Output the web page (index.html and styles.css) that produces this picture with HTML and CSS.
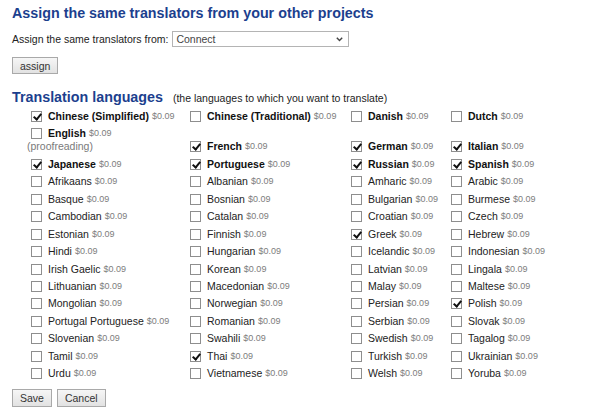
FILE: index.html
```html
<!DOCTYPE html>
<html lang="en">
<head>
    <meta charset="UTF-8">
    <title>Translation languages</title>
    <link rel="stylesheet" href="styles.css">
</head>
<body>
    <h1 class="title">Assign the same translators from your other projects</h1>

    <div class="assign-row">
        <label for="project">Assign the same translators from:</label>
        <div class="select-wrap">
            <select id="project">
                <option>Connect</option>
            </select>
            <svg class="chevron" width="7" height="5" viewBox="0 0 7 5"><path d="M0.8 0.8 L3.5 3.6 L6.2 0.8" fill="none" stroke="#444" stroke-width="1.4"/></svg>
        </div>
    </div>

    <button class="btn">assign</button>

    <h2 class="title">Translation languages <span class="hint">(the languages to which you want to translate)</span></h2>

    <div class="langs">
        <div class="lang main"><span class="box on"></span><b>Chinese (Simplified)</b> <span class="price">$0.09</span></div>
        <div class="lang main"><span class="box"></span><b>Chinese (Traditional)</b> <span class="price">$0.09</span></div>
        <div class="lang main"><span class="box"></span><b>Danish</b> <span class="price">$0.09</span></div>
        <div class="lang main"><span class="box"></span><b>Dutch</b> <span class="price">$0.09</span></div>

        <div class="cell">
            <div class="lang main"><span class="box"></span><b>English</b> <span class="price">$0.09</span></div>
            <div class="note">(proofreading)</div>
        </div>
        <div class="lang main"><span class="box on"></span><b>French</b> <span class="price">$0.09</span></div>
        <div class="lang main"><span class="box on"></span><b>German</b> <span class="price">$0.09</span></div>
        <div class="lang main"><span class="box on"></span><b>Italian</b> <span class="price">$0.09</span></div>

        <div class="lang main"><span class="box on"></span><b>Japanese</b> <span class="price">$0.09</span></div>
        <div class="lang main"><span class="box on"></span><b>Portuguese</b> <span class="price">$0.09</span></div>
        <div class="lang main"><span class="box on"></span><b>Russian</b> <span class="price">$0.09</span></div>
        <div class="lang main"><span class="box on"></span><b>Spanish</b> <span class="price">$0.09</span></div>

        <div class="lang"><span class="box"></span>Afrikaans <span class="price">$0.09</span></div>
        <div class="lang"><span class="box"></span>Albanian <span class="price">$0.09</span></div>
        <div class="lang"><span class="box"></span>Amharic <span class="price">$0.09</span></div>
        <div class="lang"><span class="box"></span>Arabic <span class="price">$0.09</span></div>

        <div class="lang"><span class="box"></span>Basque <span class="price">$0.09</span></div>
        <div class="lang"><span class="box"></span>Bosnian <span class="price">$0.09</span></div>
        <div class="lang"><span class="box"></span>Bulgarian <span class="price">$0.09</span></div>
        <div class="lang"><span class="box"></span>Burmese <span class="price">$0.09</span></div>

        <div class="lang"><span class="box"></span>Cambodian <span class="price">$0.09</span></div>
        <div class="lang"><span class="box"></span>Catalan <span class="price">$0.09</span></div>
        <div class="lang"><span class="box"></span>Croatian <span class="price">$0.09</span></div>
        <div class="lang"><span class="box"></span>Czech <span class="price">$0.09</span></div>

        <div class="lang"><span class="box"></span>Estonian <span class="price">$0.09</span></div>
        <div class="lang"><span class="box"></span>Finnish <span class="price">$0.09</span></div>
        <div class="lang"><span class="box on"></span>Greek <span class="price">$0.09</span></div>
        <div class="lang"><span class="box"></span>Hebrew <span class="price">$0.09</span></div>

        <div class="lang"><span class="box"></span>Hindi <span class="price">$0.09</span></div>
        <div class="lang"><span class="box"></span>Hungarian <span class="price">$0.09</span></div>
        <div class="lang"><span class="box"></span>Icelandic <span class="price">$0.09</span></div>
        <div class="lang"><span class="box"></span>Indonesian <span class="price">$0.09</span></div>

        <div class="lang"><span class="box"></span>Irish Gaelic <span class="price">$0.09</span></div>
        <div class="lang"><span class="box"></span>Korean <span class="price">$0.09</span></div>
        <div class="lang"><span class="box"></span>Latvian <span class="price">$0.09</span></div>
        <div class="lang"><span class="box"></span>Lingala <span class="price">$0.09</span></div>

        <div class="lang"><span class="box"></span>Lithuanian <span class="price">$0.09</span></div>
        <div class="lang"><span class="box"></span>Macedonian <span class="price">$0.09</span></div>
        <div class="lang"><span class="box"></span>Malay <span class="price">$0.09</span></div>
        <div class="lang"><span class="box"></span>Maltese <span class="price">$0.09</span></div>

        <div class="lang"><span class="box"></span>Mongolian <span class="price">$0.09</span></div>
        <div class="lang"><span class="box"></span>Norwegian <span class="price">$0.09</span></div>
        <div class="lang"><span class="box"></span>Persian <span class="price">$0.09</span></div>
        <div class="lang"><span class="box on"></span>Polish <span class="price">$0.09</span></div>

        <div class="lang"><span class="box"></span>Portugal Portuguese <span class="price">$0.09</span></div>
        <div class="lang"><span class="box"></span>Romanian <span class="price">$0.09</span></div>
        <div class="lang"><span class="box"></span>Serbian <span class="price">$0.09</span></div>
        <div class="lang"><span class="box"></span>Slovak <span class="price">$0.09</span></div>

        <div class="lang"><span class="box"></span>Slovenian <span class="price">$0.09</span></div>
        <div class="lang"><span class="box"></span>Swahili <span class="price">$0.09</span></div>
        <div class="lang"><span class="box"></span>Swedish <span class="price">$0.09</span></div>
        <div class="lang"><span class="box"></span>Tagalog <span class="price">$0.09</span></div>

        <div class="lang"><span class="box"></span>Tamil <span class="price">$0.09</span></div>
        <div class="lang"><span class="box on"></span>Thai <span class="price">$0.09</span></div>
        <div class="lang"><span class="box"></span>Turkish <span class="price">$0.09</span></div>
        <div class="lang"><span class="box"></span>Ukrainian <span class="price">$0.09</span></div>

        <div class="lang"><span class="box"></span>Urdu <span class="price">$0.09</span></div>
        <div class="lang"><span class="box"></span>Vietnamese <span class="price">$0.09</span></div>
        <div class="lang"><span class="box"></span>Welsh <span class="price">$0.09</span></div>
        <div class="lang"><span class="box"></span>Yoruba <span class="price">$0.09</span></div>
    </div>

    <div class="actions">
        <button class="btn">Save</button>
        <button class="btn">Cancel</button>
    </div>
</body>
</html>
```

FILE: styles.css
```css
body {
    margin: 0;
    padding: 0 0 0 12px;
    font-family: 'Liberation Sans', Arial, sans-serif;
    font-size: 10.5px;
    color: #222;
    background: #fff;
}

.title {
    margin: 0;
    font-size: 14.3px;
    line-height: 16px;
    font-weight: bold;
    color: #1c3f8e;
}

h1.title {
    margin-top: 4.5px;
}

h2.title {
    margin-top: 15px;
}

.hint {
    font-size: 10.5px;
    font-weight: normal;
    color: #222;
    margin-left: 6px;
}

.assign-row {
    display: flex;
    align-items: center;
    height: 16px;
    margin-top: 10.5px;
}

.assign-row label {
    margin-right: 4px;
}

.select-wrap {
    position: relative;
}

.select-wrap select {
    appearance: none;
    width: 177px;
    height: 16px;
    margin: 0;
    padding: 0 0 0 3px;
    border: 1px solid #b4b4b4;
    border-radius: 0;
    background: #fff;
    color: #444;
    font-family: 'Liberation Sans', Arial, sans-serif;
    font-size: 10.5px;
    line-height: 14px;
}

.chevron {
    position: absolute;
    right: 6px;
    top: 6px;
}

.btn {
    height: 18px;
    margin: 0;
    padding: 0 7px;
    border: 1px solid #a9a9a9;
    border-radius: 0;
    background: linear-gradient(#f6f6f6, #e2e2e2);
    color: #333;
    font-family: 'Liberation Sans', Arial, sans-serif;
    font-size: 10.5px;
    line-height: 16px;
}

.assign-row + .btn {
    display: block;
    height: 17px;
    margin-top: 10px;
}

.langs {
    display: grid;
    grid-template-columns: 159px 161px 100px 130px;
    align-items: end;
    row-gap: 4.45px;
    margin: 4px 0 0 15px;
}

.lang {
    display: flex;
    align-items: center;
    line-height: 13px;
    height: 13px;
    white-space: nowrap;
}

.lang b {
    color: #111;
}

.price {
    font-size: 9px;
    color: #7d7d7d;
    margin-left: 3px;
}

.box {
    position: relative;
    box-sizing: border-box;
    width: 11px;
    height: 11px;
    margin: 0 6px 0 4px;
    border: 1px solid #8e8e8e;
    background: #fff;
    flex: none;
}

.box.on::after {
    content: '';
    position: absolute;
    left: 2.5px;
    top: 0;
    width: 3px;
    height: 6px;
    border: solid #111;
    border-width: 0 2px 2px 0;
    transform: rotate(40deg);
}

.note {
    line-height: 13px;
    color: #7a7a7a;
}

.actions {
    display: flex;
    gap: 5px;
    margin-top: 9px;
}
```
